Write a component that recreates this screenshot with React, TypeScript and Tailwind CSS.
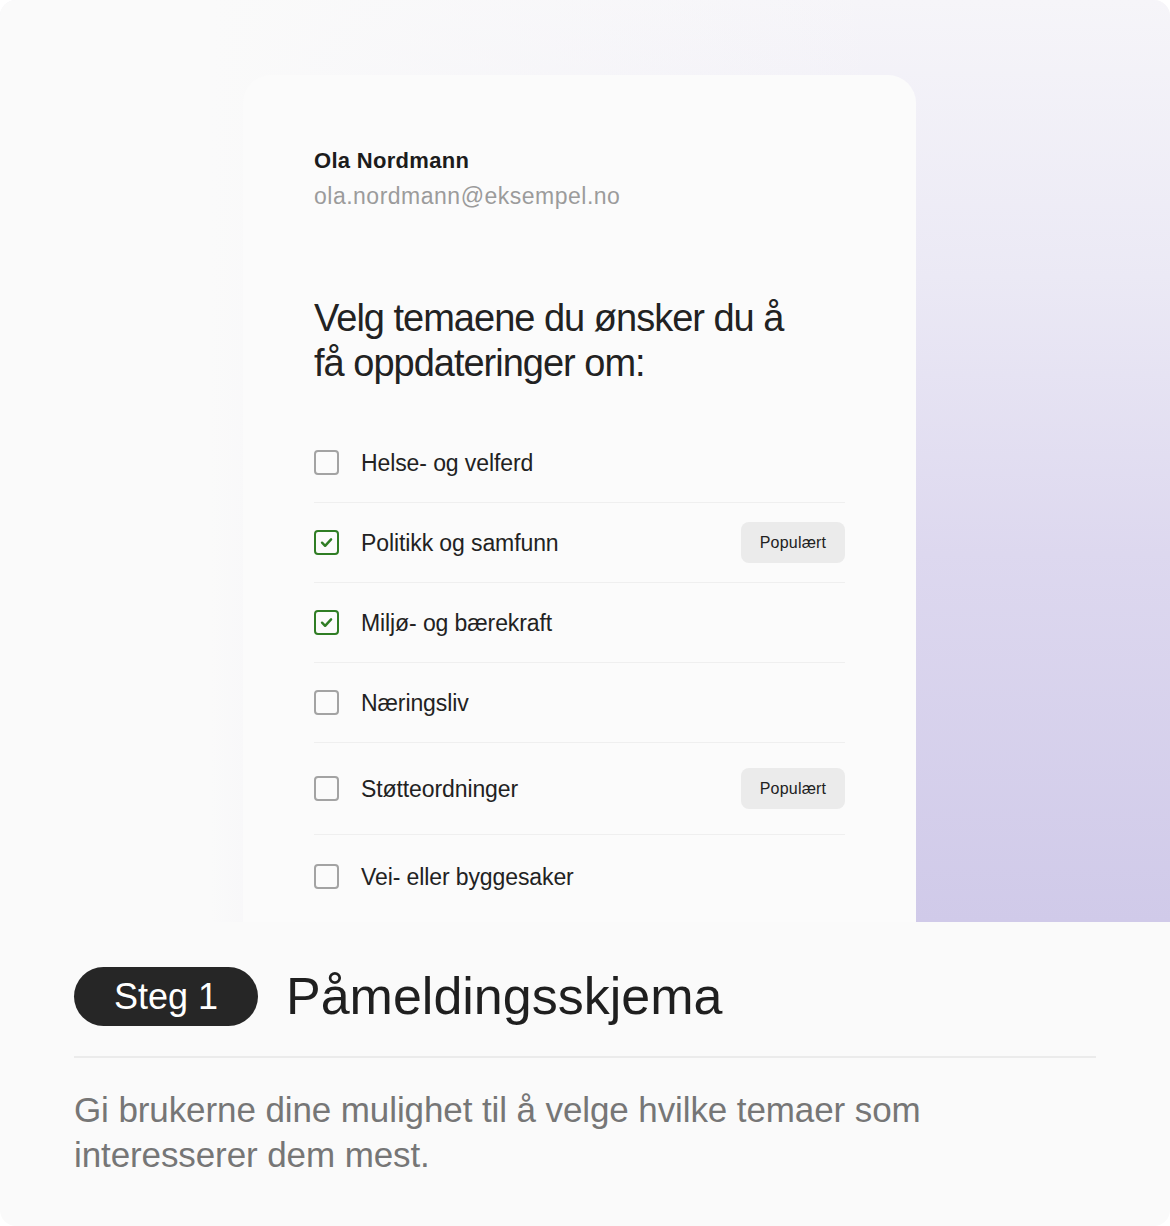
const topics = [
  { label: "Helse- og velferd", checked: false, popular: false, h: "h-[80px]" },
  { label: "Politikk og samfunn", checked: true, popular: true, h: "h-[80px]" },
  { label: "Miljø- og bærekraft", checked: true, popular: false, h: "h-[80px]" },
  { label: "Næringsliv", checked: false, popular: false, h: "h-[80px]" },
  { label: "Støtteordninger", checked: false, popular: true, h: "h-[92px]" },
  { label: "Vei- eller byggesaker", checked: false, popular: false, h: "h-[82px]" },
];

function Checkbox({ checked }: { checked: boolean }) {
  if (checked) {
    return (
      <span className="flex h-[25px] w-[25px] shrink-0 items-center justify-center rounded-[4px] border-2 border-[#2f7d24]">
        <svg viewBox="0 0 16 16" className="h-[17px] w-[17px]" fill="none">
          <path d="M3.8 8.2l2.9 2.9 5.6-6" stroke="#2f7d24" strokeWidth="2.3" strokeLinecap="round" strokeLinejoin="round" />
        </svg>
      </span>
    );
  }
  return <span className="h-[25px] w-[25px] shrink-0 rounded-[4px] border-2 border-[#a3a3a3]" />;
}

export default function App() {
  return (
    <div className="flex h-[1226px] w-[1170px] flex-col overflow-hidden rounded-[16px] bg-[#fafafa] font-['Liberation_Sans',Arial,sans-serif] text-[#1f1f1f]">
      <div className="flex h-[922px] shrink-0 bg-[linear-gradient(90deg,#fafafa_0%,#fafafa_18%,rgba(250,250,250,0)_76%),linear-gradient(180deg,#f6f5f9_0%,#ebe9f5_30%,#ddd8ef_60%,#d0cae9_100%)] pl-[243px] pt-[75px]">
        <div className="flex w-[673px] flex-col rounded-t-[28px] bg-[#fbfbfb] px-[71px] pt-[72px]">
          <div className="text-[22px] font-bold leading-[28px] tracking-[0.3px] text-[#1c1c1c]">Ola Nordmann</div>
          <div className="mt-[7px] text-[23px] leading-[28px] tracking-[0.5px] text-[#9b9b9b]">ola.nordmann@eksempel.no</div>
          <h1 className="mt-[86px] text-[38px] leading-[45px] tracking-[-1px] text-[#222]">
            Velg temaene du ønsker du å
            <br />
            få oppdateringer om:
          </h1>
          <ul className="mt-[37px] flex flex-col">
            {topics.map((t, i) => (
              <li
                key={t.label}
                className={`flex items-center gap-[22px] ${t.h} ${i < topics.length - 1 ? "border-b border-[#efefef]" : ""}`}
              >
                <Checkbox checked={t.checked} />
                <span className="flex-1 pt-[2px] text-[23px] tracking-[-0.1px] text-[#222]">{t.label}</span>
                {t.popular && (
                  <span className="flex h-[41px] w-[104px] items-center justify-center rounded-[8px] bg-[#ebebeb] text-[16px] tracking-[0.2px] text-[#222]">
                    Populært
                  </span>
                )}
              </li>
            ))}
          </ul>
        </div>
      </div>
      <div className="flex flex-col px-[74px] pt-[45px]">
        <div className="flex items-center gap-[28px]">
          <span className="flex h-[59px] w-[184px] items-center justify-center rounded-full bg-[#262626] text-[36px] text-white">
            Steg 1
          </span>
          <h2 className="text-[52px] leading-[59px] text-[#1f1f1f]">Påmeldingsskjema</h2>
        </div>
        <div className="mt-[30px] h-[2px] bg-[#ebebeb]" />
        <p className="mt-[29px] text-[35px] leading-[45px] tracking-[-0.1px] text-[#767676]">
          Gi brukerne dine mulighet til å velge hvilke temaer som
          <br />
          interesserer dem mest.
        </p>
      </div>
    </div>
  );
}
